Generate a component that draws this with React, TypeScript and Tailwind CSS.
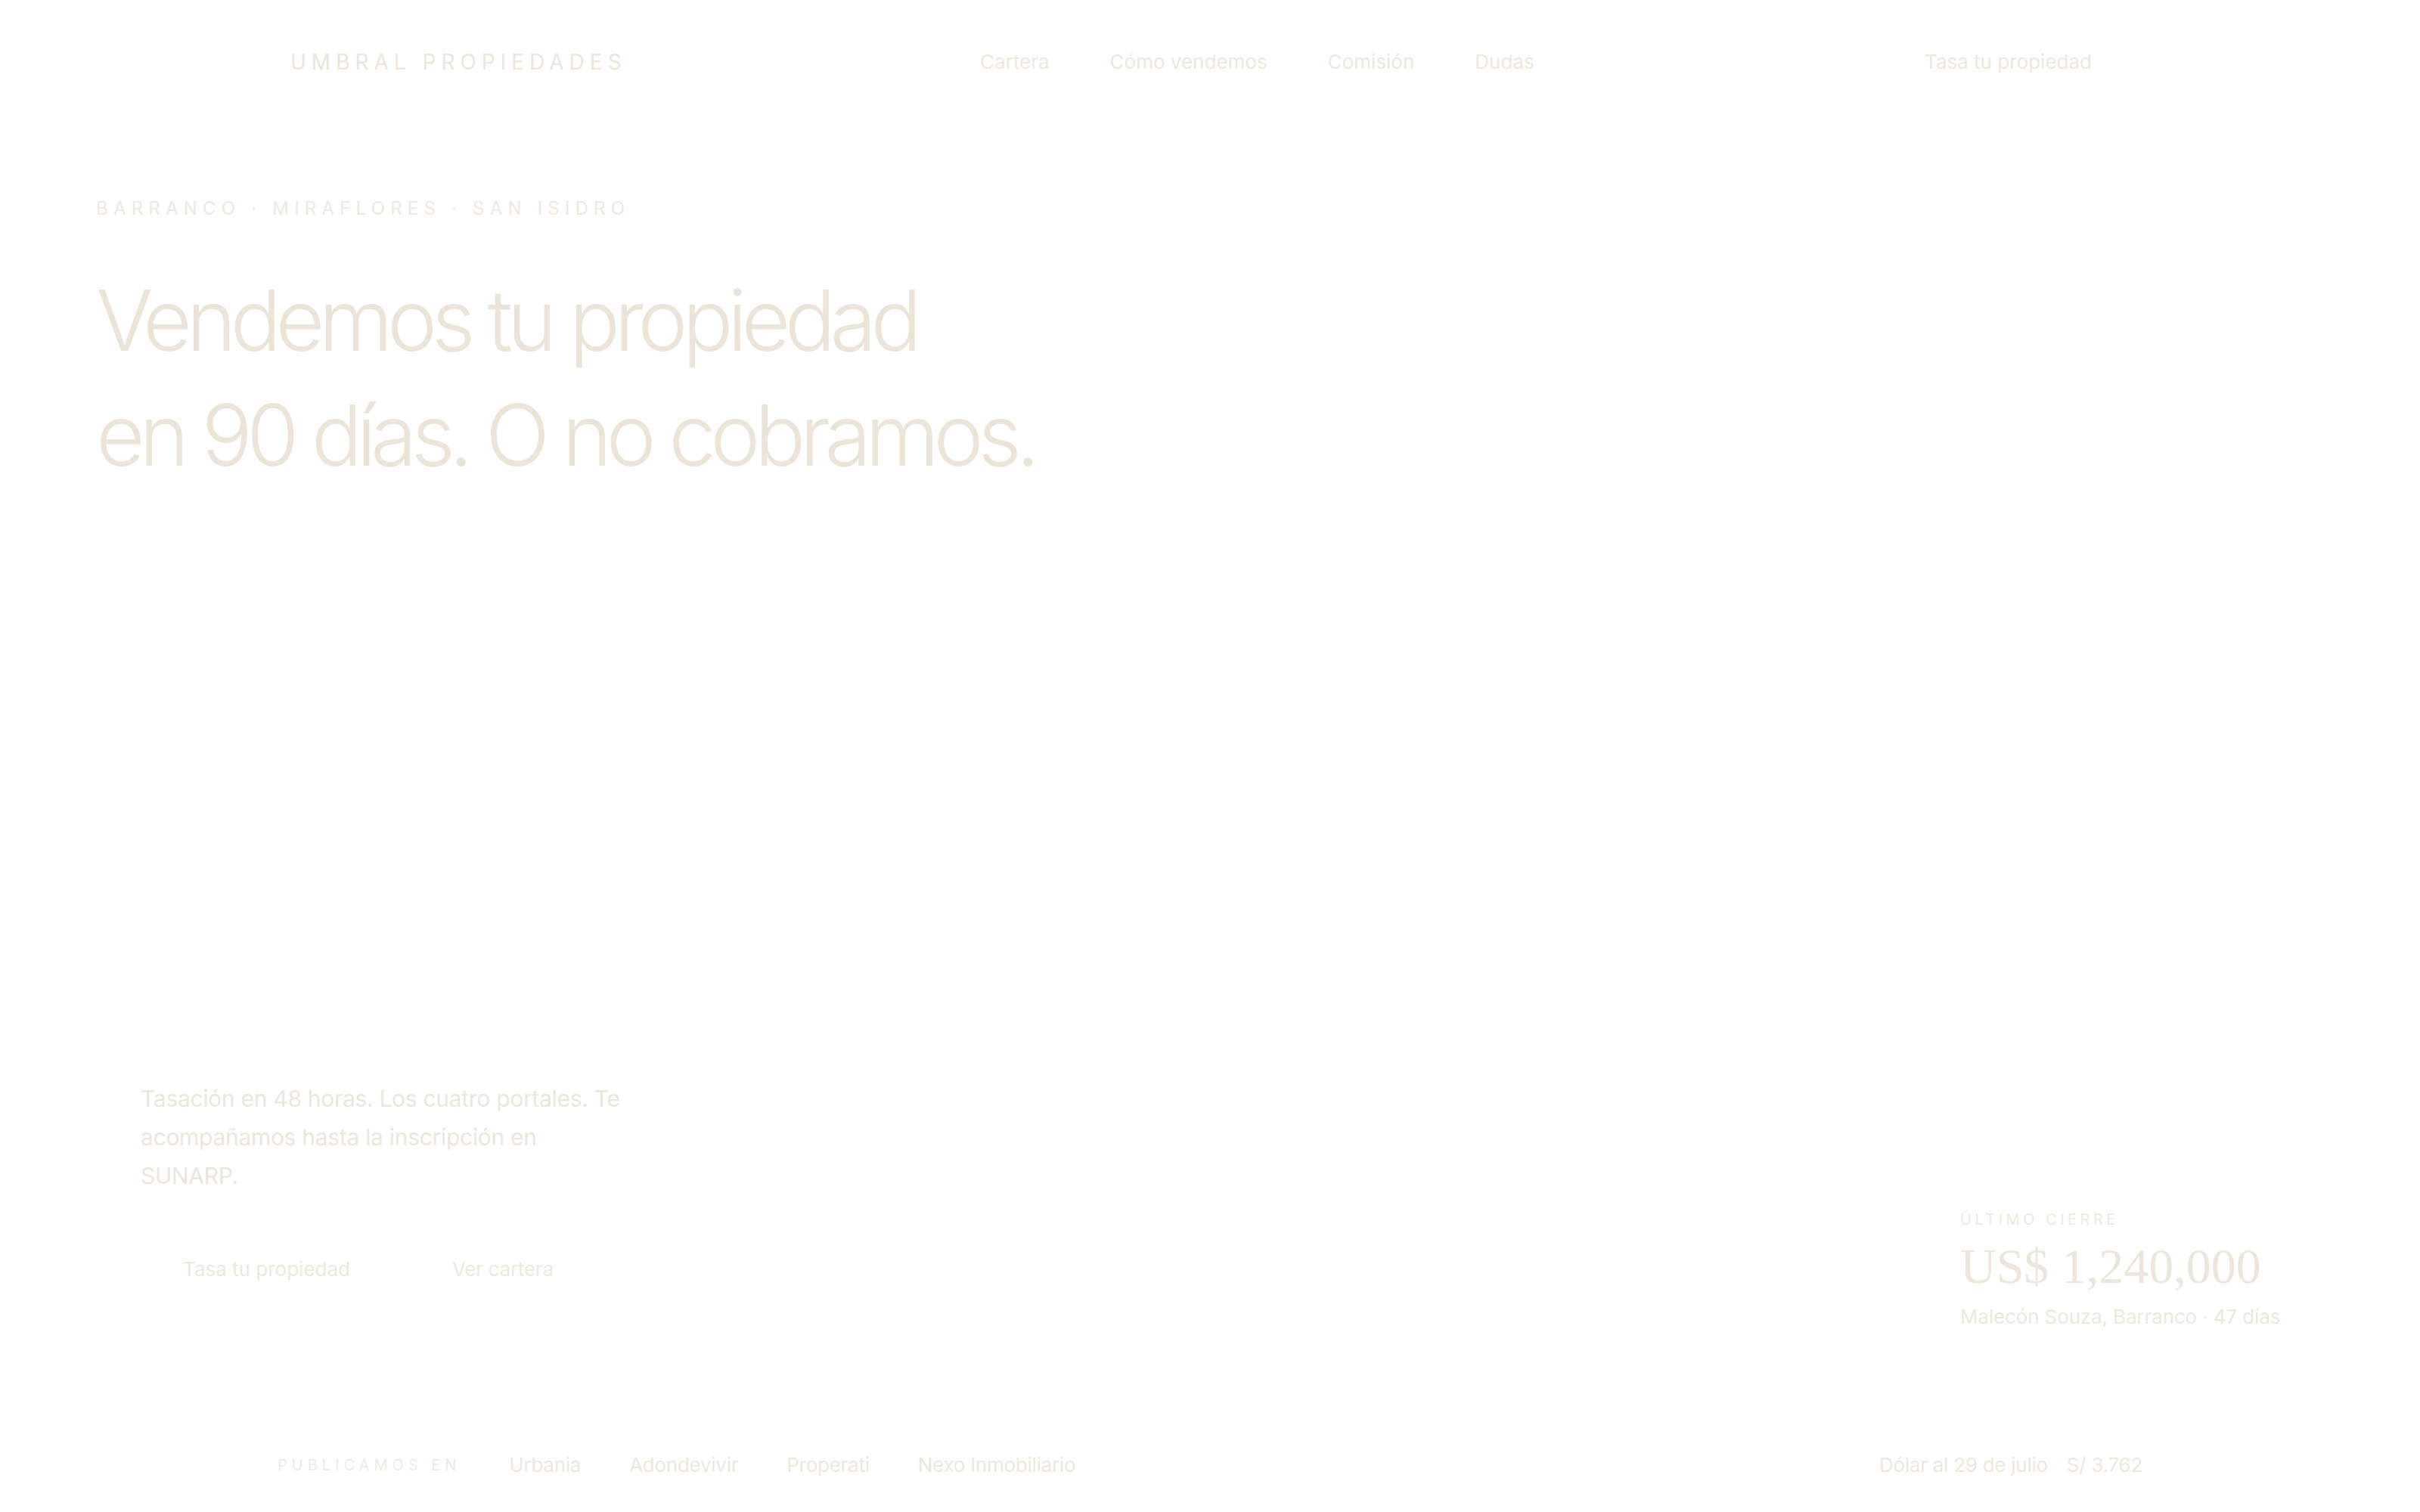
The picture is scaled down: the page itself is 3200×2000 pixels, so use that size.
const sans = "font-['Inter','Noto_Sans',sans-serif]";

const navLinks = ['Cartera', 'Cómo vendemos', 'Comisión', 'Dudas'];
const portals = ['Urbania', 'Adondevivir', 'Properati', 'Nexo Inmobiliario'];

function Header() {
  return (
    <header className="flex h-[164px] items-center">
      <div className="w-[1296px] pl-[384px]">
        <span className="text-[28px] leading-8 tracking-[0.25em] text-[#ece5d8]">UMBRAL PROPIEDADES</span>
      </div>
      <nav className="flex gap-[80px] text-[26px] leading-8 text-[#eee8dc]">
        {navLinks.map((l) => (
          <a key={l}>{l}</a>
        ))}
      </nav>
      <a className="ml-auto pr-[434px] text-[26px] leading-8 text-[#eee8dc]">Tasa tu propiedad</a>
    </header>
  );
}

function Hero() {
  return (
    <section className="pl-[127px]">
      <p className="mt-[96px] text-[24px] leading-8 tracking-[0.3em] text-[#eee8dd]">
        BARRANCO · MIRAFLORES · SAN ISIDRO
      </p>
      <h1 className="mt-[55px] text-[112px] font-light leading-[152px] tracking-[-0.068em] text-[#ebe4d7]">
        Vendemos tu propiedad
        <br />
        en 90 días. O no cobramos.
      </h1>
    </section>
  );
}

function LastClose() {
  return (
    <div className="mt-[171px]">
      <p className="text-[20px] leading-7 tracking-[0.225em] text-[#efe9de]">ÚLTIMO CIERRE</p>
      <p className="mt-[12px] font-['Liberation_Serif',serif] text-[66px] leading-[72px] text-[#ede6da]">
        US$ 1,240,000
      </p>
      <p className="mt-[13px] text-[26px] leading-9 tracking-[-0.005em] text-[#eee8dc]">
        Malecón Souza, Barranco · 47 días
      </p>
    </div>
  );
}

export default function App() {
  return (
    <div className={`${sans} flex h-[2000px] flex-col bg-white`}>
      <Header />
      <Hero />
      <div className="mt-[777px] flex items-start">
        <div className="w-[2592px] pl-[186px]">
          <p className="max-w-[648px] text-[30px] leading-[51px] tracking-[-0.01em] text-[#ede6da]">
            Tasación en 48 horas. Los cuatro portales. Te acompañamos hasta la inscripción en SUNARP.
          </p>
          <div className="mt-[62px] flex items-center">
            <a className="px-[56px] py-[20px] text-[26px] leading-8 text-[#eee8dc]">Tasa tu propiedad</a>
            <a className="ml-[79px] text-[26px] leading-8 tracking-[-0.01em] text-[#eee8dc]">Ver cartera</a>
          </div>
        </div>
        <LastClose />
      </div>
      <footer className="mt-[162px] flex items-center px-[367px] text-[26px] leading-8 tracking-[-0.01em]">
        <div className="flex items-center gap-[64px]">
          <span className="text-[20px] tracking-[0.3em] text-[#f0ebe1]">PUBLICAMOS EN</span>
          {portals.map((p) => (
            <span key={p} className="text-[#eee8dc]">
              {p}
            </span>
          ))}
        </div>
        <div className="ml-auto flex items-center gap-[25px] text-[#eee8dc]">
          <span>Dólar al 29 de julio</span>
          <span>S/ 3.762</span>
        </div>
      </footer>
    </div>
  );
}
